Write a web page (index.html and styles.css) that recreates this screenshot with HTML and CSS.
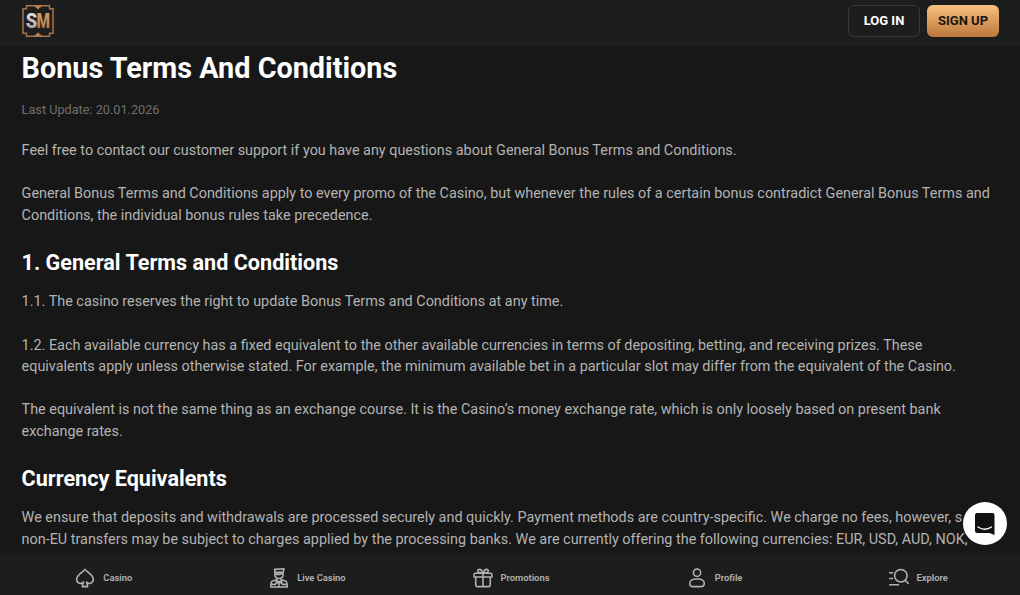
FILE: index.html
```html
<!DOCTYPE html>
<html lang="en">
<head>
    <meta charset="UTF-8">
    <meta name="viewport" content="width=device-width, initial-scale=1.0">
    <title>Bonus Terms And Conditions</title>
    <link rel="stylesheet" href="styles.css">
</head>
<body>

<header class="header">
    <a class="logo" href="#">
        <svg width="34" height="34" viewBox="0 0 34 34">
            <defs>
                <linearGradient id="gold" x1="0" y1="0" x2="0" y2="1">
                    <stop offset="0" stop-color="#e0a36c"/>
                    <stop offset="1" stop-color="#b0713f"/>
                </linearGradient>
                <linearGradient id="silver" x1="0" y1="0" x2="0" y2="1">
                    <stop offset="0" stop-color="#eeeeee"/>
                    <stop offset="1" stop-color="#969696"/>
                </linearGradient>
            </defs>
            <path d="M5.500 1.800H28.500V4.800H32V29.200H28.500V32.200H5.500V29.200H2V4.800H5.500Z" fill="none" stroke="#a5754c" stroke-width="1.500"/>
            <path d="M12.500 1.500H21.500L17 5.500ZM12.500 32.500H21.500L17 28.500Z" fill="#b98052"/>
            <text class="logo-text" x="4.800" y="23.700" textLength="11.500" lengthAdjust="spacingAndGlyphs" fill="url(#silver)">S</text>
            <text class="logo-text" x="15.500" y="23.700" textLength="13.500" lengthAdjust="spacingAndGlyphs" fill="url(#gold)">M</text>
        </svg>
    </a>
    <div class="header-buttons">
        <button class="btn btn-login">LOG IN</button>
        <button class="btn btn-signup">SIGN UP</button>
    </div>
</header>

<main class="content">
    <h1>Bonus Terms And Conditions</h1>
    <p class="updated">Last Update: 20.01.2026</p>
    <p>Feel free to contact our customer support if you have any questions about General Bonus Terms and Conditions.</p>
    <p>General Bonus Terms and Conditions apply to every promo of the Casino, but whenever the rules of a certain bonus contradict General Bonus Terms and Conditions, the individual bonus rules take precedence.</p>
    <h2>1. General Terms and Conditions</h2>
    <p>1.1. The casino reserves the right to update Bonus Terms and Conditions at any time.</p>
    <p>1.2. Each available currency has a fixed equivalent to the other available currencies in terms of depositing, betting, and receiving prizes. These equivalents apply unless otherwise stated. For example, the minimum available bet in a particular slot may differ from the equivalent of the Casino.</p>
    <p>The equivalent is not the same thing as an exchange course. It is the Casino’s money exchange rate, which is only loosely based on present bank exchange rates.</p>
    <h2>Currency Equivalents</h2>
    <p>We ensure that deposits and withdrawals are processed securely and quickly. Payment methods are country-specific. We charge no fees, however, s<br>non-EU transfers may be subject to charges applied by the processing banks. We are currently offering the following currencies: EUR, USD, AUD, NOK,</p>
</main>

<button class="chat" aria-label="Chat">
    <svg width="22" height="24" viewBox="0 0 22 24">
        <path d="M3 1H18.500Q20.500 1 20.500 3V23L15.500 21H3Q1 21 1 19V3Q1 1 3 1Z" fill="#111"/>
        <path d="M4 15Q10.800 19.600 17.500 15" fill="none" stroke="#fff" stroke-width="1.400" stroke-linecap="round"/>
    </svg>
</button>

<nav class="nav">
    <a class="nav-item" href="#">
        <svg class="icon" viewBox="0 0 22 22">
            <path d="M11 1.500C9 4.500 1.800 7.500 1.800 12.200C1.800 17 6.500 18.300 9.300 15.500L8 20.500H14L12.700 15.500C15.500 18.300 20.200 17 20.200 12.200C20.200 7.500 13 4.500 11 1.500Z"/>
        </svg>
        <span>Casino</span>
    </a>
    <a class="nav-item" href="#">
        <svg class="icon" viewBox="0 0 22 22">
            <path d="M6.200 1.500L16.500 .9L15.500 4.800H6.500ZM6.500 4.800V7.500C6.500 12.800 15.500 12.800 15.500 7.500V4.800M6.500 7H12L15.500 5.500M8.500 11.500V13L4.500 14Q2.500 14.500 2.300 16.500L1.800 20.800H20.200L19.700 16.500Q19.500 14.500 17.500 14L13.500 13V11.500"/>
            <path d="M8 13.500L11 15.200L14 13.500V17L11 15.200L8 17ZM11 16V20.500M3 18H7.500M14.500 18H19"/>
        </svg>
        <span>Live Casino</span>
    </a>
    <a class="nav-item" href="#">
        <svg class="icon" viewBox="0 0 22 22">
            <path d="M2.500 5.800H19.500Q20.800 5.800 20.800 7V10H1.200V7Q1.200 5.800 2.500 5.800ZM3 10V18.500Q3 20.500 5 20.500H17Q19 20.500 19 18.500V10M11 5.800V20.500M11 5.800C3.500 5.800 4.500 1.500 7 1.500C9.300 1.500 10.200 3.500 11 5.800C11.800 3.500 12.700 1.500 15 1.500C17.500 1.500 18.500 5.800 11 5.800"/>
        </svg>
        <span>Promotions</span>
    </a>
    <a class="nav-item" href="#">
        <svg class="icon" viewBox="0 0 22 22">
            <circle cx="11" cy="5.200" r="4"/>
            <path d="M10 12H12C16 12 19 14 19 17Q19 20.500 15 20.500H7Q3 20.500 3 17C3 14 6 12 10 12Z"/>
        </svg>
        <span>Profile</span>
    </a>
    <a class="nav-item" href="#">
        <svg class="icon" viewBox="0 0 22 22">
            <circle cx="13" cy="8.500" r="6.900"/>
            <path d="M17.800 13.500L21.200 17M.8 5.300H3.800M.8 11.500H3.800M.8 18.500H10.500"/>
        </svg>
        <span>Explore</span>
    </a>
</nav>

</body>
</html>
```

FILE: styles.css
```css
* {
    box-sizing: border-box;
}
body {
    margin: 0;
    height: 595px;
    overflow: hidden;
    display: flex;
    flex-direction: column;
    background: #171717;
    color: #b3b3b3;
    font-family: Roboto, sans-serif;
    font-size: 14.4px;
    line-height: 21.6px;
}
.header {
    flex: none;
    height: 46px;
    padding: 0 21px 4px;
    display: flex;
    align-items: center;
    justify-content: space-between;
    background: #1d1d1d;
}
.logo svg {
    display: block;
}
.logo-text {
    font-family: Roboto, sans-serif;
    font-size: 20px;
    font-weight: 900;
}
.header-buttons {
    display: flex;
    gap: 7px;
}
.btn {
    width: 72px;
    height: 32px;
    padding: 0 0 1px;
    border: 0;
    border-radius: 6px;
    font-family: inherit;
    font-size: 13px;
    font-weight: 700;
}
.btn-login {
    border: 1px solid #393939;
    background: transparent;
    color: #fff;
}
.btn-signup {
    background: linear-gradient(#f7c182, #bd773a);
    color: #1a1511;
}
.content {
    flex: 1;
    min-height: 0;
    padding: 1px 21.6px 0;
}
h1 {
    margin: 0 0 9.2px;
    color: #fff;
    font-size: 28.8px;
    font-weight: 700;
    line-height: 43px;
}
h2 {
    margin: 0 0 13.4px;
    color: #fff;
    font-size: 21.6px;
    font-weight: 700;
    line-height: 30px;
}
p {
    margin: 0 0 21.6px;
}
.updated {
    margin-bottom: 19.2px;
    color: #6f6f6f;
    font-size: 12.7px;
}
.chat {
    position: fixed;
    right: 13px;
    bottom: 50px;
    z-index: 2;
    width: 44px;
    height: 43px;
    padding: 0;
    border: 0;
    border-radius: 50%;
    background: #fff;
    display: flex;
    align-items: center;
    justify-content: center;
}
.nav {
    flex: none;
    height: 42px;
    padding: 7px 0 0 2px;
    display: grid;
    grid-template-columns: repeat(5, 1fr);
    background: #1d1d1d;
}
.nav-item {
    display: flex;
    align-items: center;
    justify-content: center;
    gap: 8px;
    color: #b3b3b3;
    font-size: 9.4px;
    font-weight: 600;
    text-decoration: none;
}
.icon {
    width: 20px;
    height: 20px;
    fill: none;
    stroke: #b3b3b3;
    stroke-width: 1.7;
    stroke-linecap: round;
    stroke-linejoin: round;
}
```
